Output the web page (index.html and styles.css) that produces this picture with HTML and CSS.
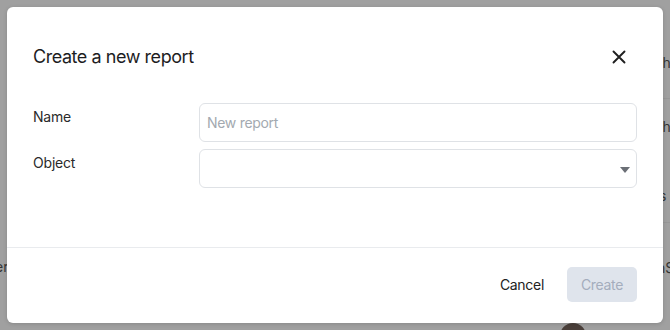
FILE: index.html
```html
<!DOCTYPE html>
<html lang="en">
<head>
<meta charset="utf-8">
<title>Create a new report</title>
<link rel="stylesheet" href="styles.css">
</head>
<body>
<div class="backdrop">
  <span class="bg-text bg-t1">th</span>
  <span class="bg-text bg-t2">th</span>
  <span class="bg-text bg-t3">s</span>
  <span class="bg-text bg-t4">nS</span>
  <span class="bg-text bg-t5">er</span>
  <span class="bg-line bg-l1"></span>
  <span class="bg-line bg-l2"></span>
  <span class="bg-avatar"></span>
</div>
<div class="modal">
  <div class="modal-header">
    <h1 class="modal-title">Create a new report</h1>
    <button class="close-btn" aria-label="Close">
      <svg width="14" height="14" viewBox="0 0 14 14"><path d="M1.5 1.5 L12.5 12.5 M12.5 1.5 L1.5 12.5" stroke="#1f1f1f" stroke-width="1.9" stroke-linecap="round" fill="none"/></svg>
    </button>
  </div>
  <div class="modal-body">
    <div class="form-row">
      <label class="form-label">Name</label>
      <div class="field"><input class="input" type="text" placeholder="New report"></div>
    </div>
    <div class="form-row">
      <label class="form-label">Object</label>
      <div class="field select">
        <svg class="caret" width="10" height="6" viewBox="0 0 10 6"><path d="M0 0 H10 L5 6 Z" fill="#6b6f76"/></svg>
      </div>
    </div>
  </div>
  <div class="modal-footer">
    <button class="btn btn-cancel">Cancel</button>
    <button class="btn btn-create" disabled>Create</button>
  </div>
</div>
</body>
</html>
```
FILE: styles.css
```css
* { box-sizing: border-box; }
html, body { margin: 0; padding: 0; overflow: hidden; }
body {
  width: 670px;
  height: 330px;
  background: #a0a0a0;
  font-family: Inter, "Noto Sans", sans-serif;
  position: relative;
  padding: 7px;
}
.backdrop { position: absolute; inset: 0; overflow: hidden; }
.bg-text {
  position: absolute;
  font-size: 14px;
  color: #353535;
}
.bg-t1 { left: 658px; top: 54px; }
.bg-t2 { left: 658px; top: 118px; }
.bg-t3 { left: 659px; top: 187px; }
.bg-t4 { left: 657px; top: 259px; }
.bg-t5 { left: -5px; top: 258px; }
.bg-line { position: absolute; height: 1px; background: #979797; left: 663px; right: 0; }
.bg-l1 { top: 98px; }
.bg-l2 { top: 222px; }
.bg-avatar {
  position: absolute;
  left: 560px; top: 323px;
  width: 26px; height: 26px;
  border-radius: 50%;
  background: #4a3f3a;
}
.modal {
  position: relative;
  width: 656px;
  height: 316px;
  background: #fff;
  border-radius: 6px;
  display: flex;
  flex-direction: column;
  box-shadow: 0 1px 4px rgba(0,0,0,0.15);
}
.modal-header {
  display: flex;
  align-items: center;
  justify-content: space-between;
  padding: 36px 34px 0 26px;
}
.modal-title {
  margin: 0;
  font-size: 18px;
  font-weight: 400;
  line-height: 28px;
  color: #1d1d1f;
  letter-spacing: -0.45px;
}
.close-btn {
  border: 0;
  background: none;
  padding: 0;
  width: 20px; height: 20px;
  display: flex; align-items: center; justify-content: center;
}
.modal-body {
  display: flex;
  flex-direction: column;
  gap: 7px;
  padding: 32px 26px 59px 26px;
  border-bottom: 1px solid #e9ebee;
}
.form-row {
  display: flex;
  align-items: flex-start;
}
.form-label {
  width: 166px;
  flex: none;
  font-size: 14px;
  color: #2a2a2a;
  padding-top: 5px;
  line-height: 18px;
  letter-spacing: -0.2px;
}
.field {
  flex: 1;
  height: 39px;
  border: 1px solid #dfe2e6;
  border-radius: 6px;
  display: flex;
  align-items: center;
}
.input {
  border: 0;
  outline: none;
  background: transparent;
  width: 100%;
  height: 100%;
  padding: 0 7px;
  font-family: inherit;
  font-size: 14px;
  letter-spacing: -0.3px;
  color: #222;
}
.input::placeholder { color: #a3a9b0; }
.select { justify-content: flex-end; padding-right: 6px; }
.caret { margin-top: 2px; }
.modal-footer {
  flex: 1;
  display: flex;
  justify-content: flex-end;
  align-items: center;
  gap: 12px;
  padding: 0 26px 2px 26px;
}
.btn {
  font-family: inherit;
  font-size: 14px;
  letter-spacing: -0.3px;
  border: 0;
  border-radius: 5px;
  height: 35px;
  padding: 0 11px;
  background: none;
}
.btn-cancel { color: #222; }
.btn-create {
  width: 70px;
  background: #dfe4ec;
  color: #a4adbd;
}
```
